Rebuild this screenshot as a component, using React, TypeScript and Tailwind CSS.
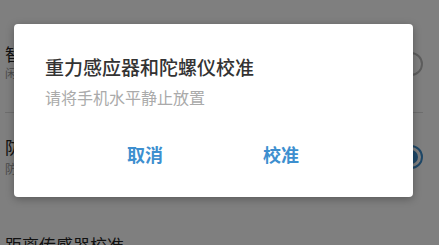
export default function App() {
  const font = { fontFamily: '"Noto Sans CJK SC", "Noto Sans", sans-serif' };

  return (
    <div className="relative h-[245px] w-[439px] overflow-hidden bg-white" style={font}>
      {/* settings list underneath */}
      <div className="flex flex-col">
        <div className="h-[28px]" />
        <div className="flex h-[72px] items-center justify-between pl-[5px] pr-[16px]">
          <div className="-mt-[4px] flex flex-col">
            <span className="text-[17px] leading-[22px] text-[#222]">智能防误触模式</span>
            <span className="text-[12px] leading-[16px] text-[#999]">闲置时自动降低灵敏度</span>
          </div>
          <div className="h-[24px] w-[24px] rounded-full border-2 border-[#bbb]" />
        </div>
        <div className="h-[12px]" />
        <div className="ml-[5px] mr-[16px] h-px bg-[#ddd]" />
        <div className="flex h-[88px] items-center justify-between pl-[5px] pr-[16px]">
          <div className="flex flex-col">
            <span className="text-[17px] leading-[22px] text-[#222]">防误触模式</span>
            <span className="mt-[2px] text-[12px] leading-[18px] text-[#999]">防止口袋中误操作</span>
          </div>
          <div className="flex h-[24px] w-[24px] items-center justify-center rounded-full border-2 border-[#3d8fcf]">
            <div className="h-[14px] w-[14px] rounded-full bg-[#3d8fcf]" />
          </div>
        </div>
        <div className="pl-[5px] pt-[33px] text-[17px] leading-[22px] text-[#222]">距离传感器校准</div>
      </div>

      {/* dim overlay */}
      <div className="absolute inset-0 bg-black/50" />

      {/* dialog */}
      <div className="absolute left-[14px] top-[24px] flex h-[173px] w-[399px] flex-col rounded-[4px] bg-white shadow-[0_2px_8px_rgba(0,0,0,0.3)]">
        <div className="pl-[31px] pt-[31px] text-[19px] font-medium leading-[24px] text-[#333]">
          重力感应器和陀螺仪校准
        </div>
        <div className="pl-[31px] pt-[7px] text-[16px] leading-[22px] text-[#aaa]">请将手机水平静止放置</div>
        <div className="flex pt-[34px] text-[18px] font-bold leading-[24px] text-[#3d8fcf]">
          <div className="w-[249px] pl-[113px]">取消</div>
          <div>校准</div>
        </div>
      </div>
    </div>
  );
}
